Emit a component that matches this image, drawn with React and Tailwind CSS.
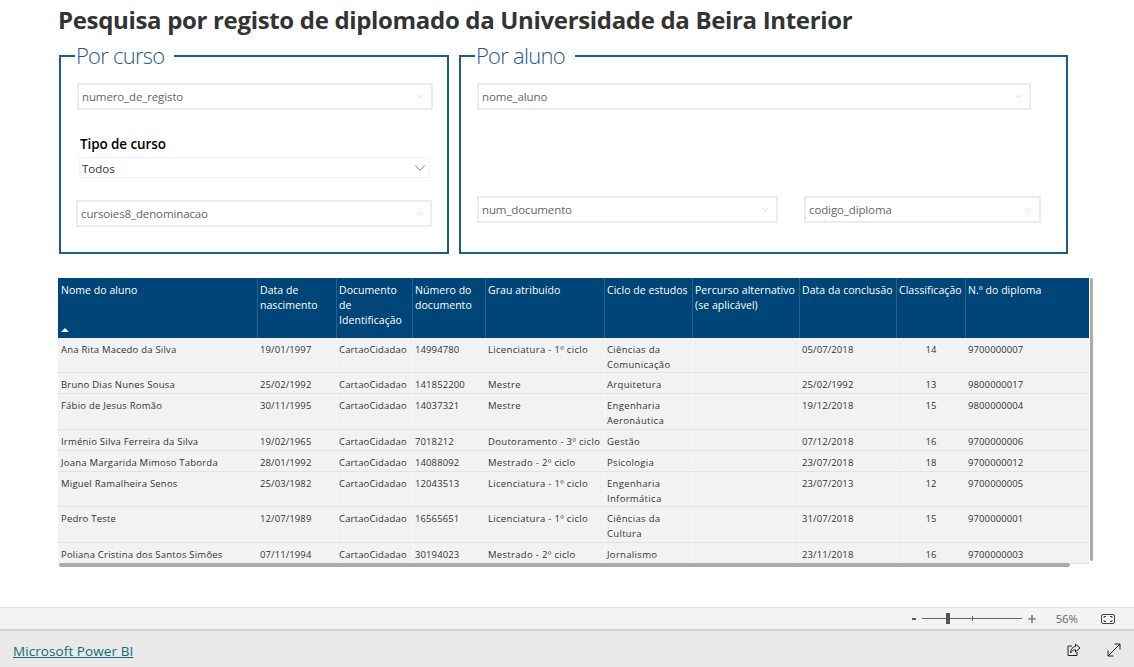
import { ChevronDown } from 'lucide-react'

const cols = 'grid grid-cols-[199px_79px_76px_73px_119px_88px_107px_97px_69px_124px]'

const headers = [
  'Nome do aluno',
  'Data de nascimento',
  'Documento de Identificação',
  'Número do documento',
  'Grau atribuído',
  'Ciclo de estudos',
  'Percurso alternativo (se aplicável)',
  'Data da conclusão',
  'Classificação',
  'N.º do diploma',
]

// letter spacing per column, the numbers need less than the names
const cellStyles = [
  'tracking-[0.22px]',
  'tracking-[0.1px]',
  'tracking-[0.15px]',
  'tracking-[0.1px]',
  'tracking-[0.32px]',
  'tracking-[0.32px]',
  '',
  'tracking-[0.1px]',
  'text-center',
  'tracking-[0.1px]',
]

const rows = [
  { h: 'h-[35px]', c: ['Ana Rita Macedo da Silva', '19/01/1997', 'CartaoCidadao', '14994780', 'Licenciatura - 1º ciclo', 'Ciências da Comunicação', '', '05/07/2018', '14', '9700000007'] },
  { h: 'h-[21px]', c: ['Bruno Dias Nunes Sousa', '25/02/1992', 'CartaoCidadao', '141852200', 'Mestre', 'Arquitetura', '', '25/02/1992', '13', '9800000017'] },
  { h: 'h-[36px]', c: ['Fábio de Jesus Romão', '30/11/1995', 'CartaoCidadao', '14037321', 'Mestre', 'Engenharia Aeronáutica', '', '19/12/2018', '15', '9800000004'] },
  { h: 'h-[21px]', c: ['Irménio Silva Ferreira da Silva', '19/02/1965', 'CartaoCidadao', '7018212', 'Doutoramento - 3º ciclo', 'Gestão', '', '07/12/2018', '16', '9700000006'] },
  { h: 'h-[21px]', c: ['Joana Margarida Mimoso Taborda', '28/01/1992', 'CartaoCidadao', '14088092', 'Mestrado - 2º ciclo', 'Psicologia', '', '23/07/2018', '18', '9700000012'] },
  { h: 'h-[35px]', c: ['Miguel Ramalheira Senos', '25/03/1982', 'CartaoCidadao', '12043513', 'Licenciatura - 1º ciclo', 'Engenharia Informática', '', '23/07/2013', '12', '9700000005'] },
  { h: 'h-[36px]', c: ['Pedro Teste', '12/07/1989', 'CartaoCidadao', '16565651', 'Licenciatura - 1º ciclo', 'Ciências da Cultura', '', '31/07/2018', '15', '9700000001'] },
  { h: 'h-[21px]', c: ['Poliana Cristina dos Santos Simões', '07/11/1994', 'CartaoCidadao', '30194023', 'Mestrado - 2º ciclo', 'Jornalismo', '', '23/11/2018', '16', '9700000003'] },
]

const Slicer = ({ label, className }) => (
  <div className={`h-[27px] border-2 border-[#ececec] flex items-center justify-between pl-[3px] pr-[6px] text-[11.5px] text-[#666666] tracking-[-0.12px] ${className}`}>
    <span>{label}</span>
    <ChevronDown size={9} strokeWidth={1} className="text-[#999999]" />
  </div>
)

const Group = ({ title, className, children }) => (
  <fieldset className={`h-[207px] border-2 border-[#1f5c87] pl-[15px] ${className}`}>
    <legend className="ml-[-1px] pl-[1px] pr-[10px] text-[22px] leading-[16px] h-[18px] font-light text-[#1f5c87] tracking-[-0.75px]">{title}</legend>
    {children}
  </fieldset>
)

const App = () => {
  return (
    <div className="w-[1134px] h-[667px] overflow-hidden bg-white flex flex-col font-['Open_Sans','Noto_Sans',sans-serif]">
      <div className="h-[607px] pl-[58px] flex flex-col">
        <h1 className="h-[47px] pt-[2px] text-[24px] leading-[36px] font-bold text-[#333333] tracking-[-0.33px] whitespace-nowrap">
          Pesquisa por registo de diplomado da Universidade da Beira Interior
        </h1>

        <div className="flex gap-[10px] pl-px">
          <Group title="Por curso" className="w-[390px]">
            <Slicer label="numero_de_registo" className="mt-[18px] w-[356px] ml-px" />
            <div className="mt-[25px] ml-[4px] text-[13.5px] leading-[18px] font-semibold text-black tracking-[-0.1px]">Tipo de curso</div>
            <div className="mt-[4px] ml-[3px] w-[351px] h-[21px] border border-[#f2f2f2] flex items-center justify-between pl-[2px] text-[11.5px] text-[#333333]">
              <span className="pt-[2px]">Todos</span>
              <ChevronDown size={18} strokeWidth={0.9} className="text-[#444444]" />
            </div>
            <Slicer label="cursoies8_denominacao" className="mt-[22px] w-[356px]" />
          </Group>

          <Group title="Por aluno" className="w-[609px]">
            <Slicer label="nome_aluno" className="mt-[18px] w-[554px] ml-px" />
            <div className="mt-[86px] ml-px flex gap-[26px]">
              <Slicer label="num_documento" className="w-[301px]" />
              <Slicer label="codigo_diploma" className="w-[237px]" />
            </div>
          </Group>
        </div>

        <div className="relative mt-[24px] w-[1031px]">
          <div className={`${cols} h-[60px] bg-[#004578] text-white text-[10.5px] leading-[15px] tracking-[0.05px]`}>
            {headers.map((label, i) => (
              <div key={label} className="relative pl-[2px] first:pl-[3px] pr-[2px] pt-[5px] border-l first:border-l-0 border-[#2b6189]">
                {label}
                {i === 0 && (
                  <svg width="8" height="4" viewBox="0 0 8 4" className="absolute left-[3px] bottom-[6px]">
                    <path d="M0 4 L4 0 L8 4 Z" fill="#ffffff" />
                  </svg>
                )}
              </div>
            ))}
          </div>

          {rows.map((row) => (
            <div key={row.c[0]} className={`${cols} ${row.h} bg-[#f2f2f2] border-b border-[#e3e3e3] last:border-b-0 text-[9.5px] leading-[15px] text-[#333333] overflow-hidden`}>
              {row.c.map((cell, i) => (
                <div key={i} className={`pl-[2px] first:pl-[3px] pr-[2px] pt-[4px] border-l first:border-l-0 border-[#f6f6f6] ${cellStyles[i]}`}>{cell}</div>
              ))}
            </div>
          ))}

          <div className="absolute left-[1px] top-[285px] w-[1011px] h-[4px] rounded-sm bg-[#ababab]" />
          <div className="absolute left-[1032px] top-0 w-[3px] h-[283px] rounded-sm bg-[#ababab]" />
        </div>
      </div>

      <div className="h-[24px] bg-[#f3f3f3] border-t border-[#e3e3e3] border-b-2 border-b-[#d2d2d2] flex items-center justify-end pr-[19px] text-[#666666]">
        <span className="w-[4px] h-[2px] bg-[#555555] mr-[6px]" />
        <div className="relative w-[100px] h-px bg-[#666666] mr-[6px]">
          <span className="absolute left-[24px] top-[-5px] w-[4px] h-[11px] bg-[#555555]" />
          <span className="absolute left-[50px] top-[-2px] w-px h-[5px] bg-[#666666]" />
        </div>
        <svg width="8" height="8" viewBox="0 0 8 8" className="mr-[20px]">
          <path d="M0 4 H8 M4 0 V8" stroke="#555555" strokeWidth="1.2" />
        </svg>
        <span className="text-[11.5px] tracking-[-0.1px] mr-[23px]">56%</span>
        <svg width="14" height="10" viewBox="0 0 14 10" fill="none" stroke="#444444" strokeWidth="1">
          <rect x="0.5" y="0.5" width="13" height="9" rx="1.5" />
          <path d="M3 4 V2.5 H5 M9 2.5 H11 V4 M11 6 V7.5 H9 M5 7.5 H3 V6" />
        </svg>
      </div>

      <div className="h-[36px] pt-[2px] bg-[#e9e9e9] flex items-center justify-between pl-[13px] pr-[13px]">
        <a href="#" className="pt-[2px] text-[13.5px] text-[#136c73] underline tracking-[0.08px]">Microsoft Power BI</a>
        <div className="flex items-center gap-[26px]">
          <svg width="14" height="14" viewBox="0 0 14 14" fill="none" stroke="#222222" strokeWidth="1">
            <path d="M5 3 H1 V12.5 H10 V9" />
            <path d="M8.5 1 L13 5 L8.5 9 V6.8 C6 6.8 4.5 8 3.5 10 C3.5 6.5 5.5 3.8 8.5 3.4 Z" />
          </svg>
          <svg width="14" height="14" viewBox="0 0 14 14" fill="none" stroke="#222222" strokeWidth="1">
            <path d="M1 13 L13 1 M7.5 1 H13 V6.5 M1 7.5 V13 H6.5" />
          </svg>
        </div>
      </div>
    </div>
  )
}

export default App
